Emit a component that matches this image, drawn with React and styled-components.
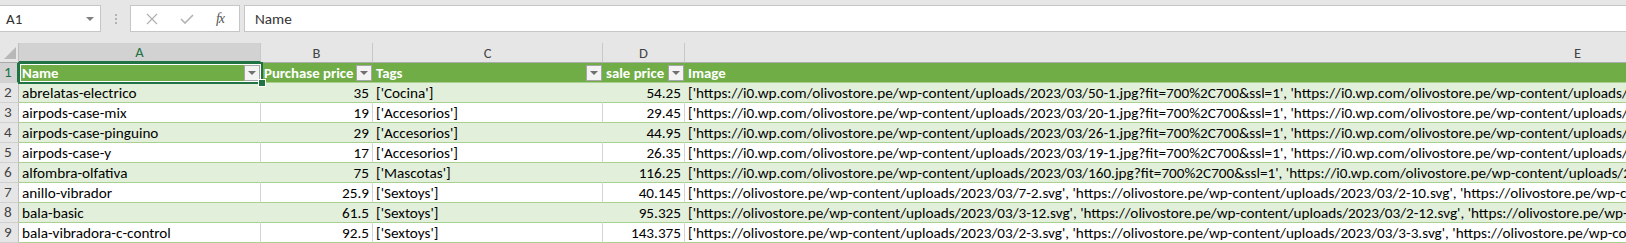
import React from 'react';
import styled, { createGlobalStyle, css } from 'styled-components';

const COLS = '19px 242px 112px 230px 82px 2200px';
const LETTERS = ['A', 'B', 'C', 'D', 'E'];
const HEADERS = ['Name', 'Purchase price', 'Tags', 'sale price', 'Image'];

const WP = 'https://i0.wp.com/olivostore.pe/wp-content/uploads/2023/03/';
const OS = 'https://olivostore.pe/wp-content/uploads/2023/03/';
const q = '?fit=700%2C700&ssl=1';

const rows = [
  ['abrelatas-electrico', '35', "['Cocina']", '54.25', `['${WP}50-1.jpg${q}', '${WP}50-2.jpg${q}', '${WP}50-3.jpg${q}']`],
  ['airpods-case-mix', '19', "['Accesorios']", '29.45', `['${WP}20-1.jpg${q}', '${WP}20-2.jpg${q}', '${WP}20-3.jpg${q}']`],
  ['airpods-case-pinguino', '29', "['Accesorios']", '44.95', `['${WP}26-1.jpg${q}', '${WP}26-2.jpg${q}', '${WP}26-3.jpg${q}']`],
  ['airpods-case-y', '17', "['Accesorios']", '26.35', `['${WP}19-1.jpg${q}', '${WP}19-2.jpg${q}', '${WP}19-3.jpg${q}']`],
  ['alfombra-olfativa', '75', "['Mascotas']", '116.25', `['${WP}160.jpg${q}', '${WP}2023-03-161.jpg${q}']`],
  ['anillo-vibrador', '25.9', "['Sextoys']", '40.145', `['${OS}7-2.svg', '${OS}2-10.svg', '${OS}3-10.svg', '${OS}4-10.svg']`],
  ['bala-basic', '61.5', "['Sextoys']", '95.325', `['${OS}3-12.svg', '${OS}2-12.svg', '${OS}wp-4-12.svg', '${OS}5-12.svg']`],
  ['bala-vibradora-c-control', '92.5', "['Sextoys']", '143.375', `['${OS}2-3.svg', '${OS}3-3.svg', '${OS}wp-co-4-3.svg', '${OS}5-3.svg']`],
];

const Global = createGlobalStyle`
  html, body { margin: 0; padding: 0; background: #e6e6e6; overflow: hidden; }
  body { font-family: "Carlito", "Lato", "Liberation Sans", sans-serif; }
`;

const Window = styled.div`
  width: 1626px;
  height: 243px;
  overflow: hidden;
  background: #e6e6e6;
`;

const Toolbar = styled.div`
  display: flex;
  align-items: center;
  height: 27px;
  padding: 5px 0 11px 0;
`;

const NameBox = styled.div`
  display: flex;
  align-items: center;
  justify-content: space-between;
  box-sizing: border-box;
  width: 101px;
  height: 27px;
  padding: 0 6px 0 6px;
  background: #fff;
  border: 1px solid #c6c6c6;
  border-left: none;
  font-size: 15px;
  color: #333;
`;

const Caret = styled.span`
  width: 0;
  height: 0;
  border-left: 4px solid transparent;
  border-right: 4px solid transparent;
  border-top: 4px solid #808080;
`;

const Grip = styled.div`
  display: flex;
  flex-direction: column;
  gap: 2px;
  margin: 0 13px 0 14px;
  & > span {
    width: 2px;
    height: 2px;
    background: #b2b2b2;
  }
`;

const FuncBox = styled.div`
  display: flex;
  align-items: center;
  justify-content: space-around;
  box-sizing: border-box;
  width: 110px;
  height: 27px;
  padding: 0 4px;
  background: #fff;
  border: 1px solid #c6c6c6;
`;

const Fx = styled.span`
  font-family: "Liberation Serif", serif;
  font-style: italic;
  font-size: 14px;
  color: #555;
  letter-spacing: -1px;
`;

const FormulaInput = styled.div`
  flex: 1;
  display: flex;
  align-items: center;
  box-sizing: border-box;
  height: 27px;
  margin-left: 4px;
  padding-left: 10px;
  background: #fff;
  border: 1px solid #c6c6c6;
  border-right: none;
  font-size: 15.2px;
  color: #333;
`;

const Row = styled.div`
  display: grid;
  grid-template-columns: ${COLS};
  height: 20px;
`;

const Corner = styled.div`
  box-sizing: border-box;
  display: flex;
  align-items: flex-end;
  justify-content: flex-end;
  padding: 0 2px 3px 0;
  border-right: 1px solid #bdbdbd;
  border-bottom: 1px solid #ababab;
  background: #e6e6e6;
  & > span {
    width: 0;
    height: 0;
    border-left: 12px solid transparent;
    border-bottom: 12px solid #b8b8b8;
  }
`;

const ColHead = styled.div`
  box-sizing: border-box;
  display: flex;
  align-items: center;
  justify-content: center;
  font-size: 14.5px;
  color: #444;
  background: #e6e6e6;
  border-right: 1px solid #c8c8c8;
  border-bottom: 1px solid #ababab;
  ${(p) => p.$active && css`
    background: #d2d2d2;
    color: #217346;
    border-bottom: 2px solid #217346;
  `}
  ${(p) => p.$wide && css`
    justify-content: flex-start;
    padding-left: 889px;
  `}
`;

const RowHead = styled.div`
  box-sizing: border-box;
  padding-left: 4px;
  font-size: 15.2px;
  line-height: 19px;
  color: #444;
  background: #e6e6e6;
  border-right: 1px solid #bdbdbd;
  border-bottom: 1px solid #d0d0d0;
  ${(p) => p.$active && css`
    background: #d2d2d2;
    color: #217346;
    border-right: 2px solid #217346;
  `}
`;

const Cell = styled.div`
  position: relative;
  box-sizing: border-box;
  display: flex;
  align-items: center;
  justify-content: ${(p) => (p.$num ? 'flex-end' : 'flex-start')};
  padding: 0 3px 0 3px;
  font-size: 15.2px;
  color: #000;
  white-space: nowrap;
  overflow: hidden;
  background: ${(p) => (p.$band ? '#e2efda' : '#fff')};
  border-right: 1px solid ${(p) => (p.$band ? '#e2efda' : '#d4d4d4')};
  border-bottom: 1px solid #a9d08e;
`;

const HeadCell = styled.div`
  position: relative;
  box-sizing: border-box;
  display: flex;
  align-items: center;
  justify-content: space-between;
  padding: 0 1px 0 3px;
  font-size: 14.8px;
  font-weight: bold;
  color: #fff;
  white-space: nowrap;
  overflow: ${(p) => (p.$selected ? 'visible' : 'hidden')};
  background: #70ad47;
  border-bottom: 1px solid #a9d08e;
  ${(p) => p.$selected && css`
    z-index: 2;
    &::before {
      content: '';
      position: absolute;
      inset: -1px -2px -2px -1px;
      border: 2px solid #217346;
      box-shadow: inset 0 0 0 1px #fff;
      pointer-events: none;
    }
  `}
`;

const Handle = styled.span`
  position: absolute;
  right: -5px;
  bottom: -5px;
  width: 6px;
  height: 6px;
  background: #217346;
  border: 1px solid #fff;
  z-index: 3;
`;

const FilterBtn = styled.span`
  flex: none;
  display: flex;
  align-items: center;
  justify-content: center;
  box-sizing: border-box;
  width: 16px;
  height: 16px;
  background: #f3f3f3;
  border: 1px solid #a6a6a6;
  & > span {
    width: 0;
    height: 0;
    border-left: 4px solid transparent;
    border-right: 4px solid transparent;
    border-top: 4px solid #707070;
  }
`;

const Filter = () => (
  <FilterBtn>
    <span />
  </FilterBtn>
);

const Cross = () => (
  <svg width="12" height="12" viewBox="0 0 12 12">
    <path d="M1 1 L11 11 M11 1 L1 11" stroke="#b3b3b3" strokeWidth="1.3" fill="none" />
  </svg>
);

const Check = () => (
  <svg width="14" height="12" viewBox="0 0 14 12">
    <path d="M1 6 L5 10 L13 2" stroke="#b3b3b3" strokeWidth="1.6" fill="none" />
  </svg>
);

export default function App() {
  return (
    <Window>
      <Global />
      <Toolbar>
        <NameBox>
          A1
          <Caret />
        </NameBox>
        <Grip>
          <span />
          <span />
          <span />
        </Grip>
        <FuncBox>
          <Cross />
          <Check />
          <Fx>fx</Fx>
        </FuncBox>
        <FormulaInput>Name</FormulaInput>
      </Toolbar>

      <Row>
        <Corner>
          <span />
        </Corner>
        {LETTERS.map((l, i) => (
          <ColHead key={l} $active={i === 0} $wide={l === 'E'}>
            {l}
          </ColHead>
        ))}
      </Row>

      <Row>
        <RowHead $active>1</RowHead>
        {HEADERS.map((h, i) => (
          <HeadCell key={h} $selected={i === 0}>
            <span>{h}</span>
            {i < 4 && <Filter />}
            {i === 0 && <Handle />}
          </HeadCell>
        ))}
      </Row>

      {rows.map((r, idx) => (
        <Row key={r[0]}>
          <RowHead>{idx + 2}</RowHead>
          {r.map((v, c) => (
            <Cell key={c} $band={idx % 2 === 0} $num={c === 1 || c === 3}>
              {v}
            </Cell>
          ))}
        </Row>
      ))}
    </Window>
  );
}
